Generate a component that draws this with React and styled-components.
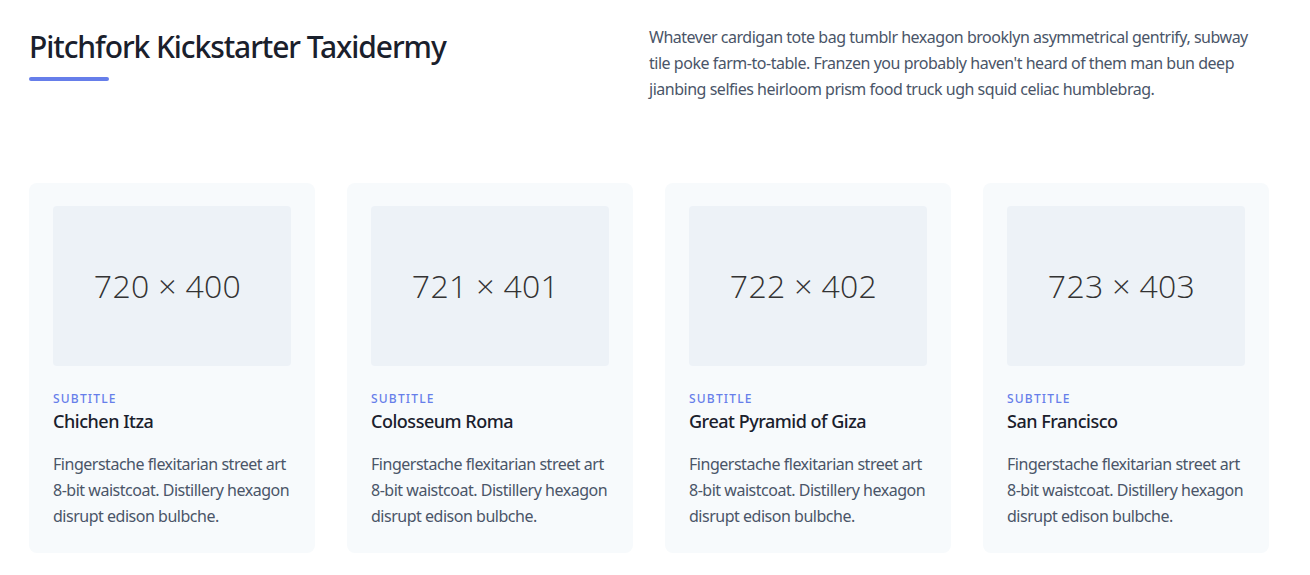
import React from "react";
import styled, { createGlobalStyle } from "styled-components";

const cards = [
  { size: "720 × 400", name: "Chichen Itza" },
  { size: "721 × 401", name: "Colosseum Roma" },
  { size: "722 × 402", name: "Great Pyramid of Giza" },
  { size: "723 × 403", name: "San Francisco" },
];

const App = () => {
  return (
    <>
      <GlobalStyle />
      <Section>
        <Header>
          <TitleBox>
            <Title>Pitchfork Kickstarter Taxidermy</Title>
            <Bar />
          </TitleBox>
          <Intro>
            Whatever cardigan tote bag tumblr hexagon brooklyn asymmetrical
            gentrify, subway tile poke farm-to-table. Franzen you probably
            haven't heard of them man bun deep jianbing selfies heirloom prism
            food truck ugh squid celiac humblebrag.
          </Intro>
        </Header>

        <Grid>
          {cards.map((card) => (
            <Card key={card.name}>
              <Placeholder>{card.size}</Placeholder>
              <Subtitle>SUBTITLE</Subtitle>
              <Name>{card.name}</Name>
              <Description>
                Fingerstache flexitarian street art 8-bit waistcoat. Distillery
                hexagon disrupt edison bulbche.
              </Description>
            </Card>
          ))}
        </Grid>
      </Section>
    </>
  );
};

export default App;

const GlobalStyle = createGlobalStyle`
  * { box-sizing: border-box; }
  body {
    margin: 0;
    background: #fff;
    font-family: "Noto Sans", "Open Sans", sans-serif;
    letter-spacing: -0.03em;
    color: #4a5568;
  }
  h1, h2, h3, p { margin: 0; }
`;

const Section = styled.section`
  width: 1240px;
  margin-left: 29px;
  padding-top: 24px;
`;

const Header = styled.div`
  display: flex;
  margin-bottom: 81px;
`;

const TitleBox = styled.div`
  width: 50%;
  padding-top: 5px;
`;

const Title = styled.h1`
  font-size: 30px;
  line-height: 36px;
  font-weight: 500;
  letter-spacing: -0.036em;
  color: #1a202c;
  margin-bottom: 12px;
`;

const Bar = styled.div`
  width: 80px;
  height: 4px;
  border-radius: 4px;
  background: #667eea;
`;

const Intro = styled.p`
  width: 50%;
  font-size: 16px;
  line-height: 26px;
  color: #4a5568;
`;

const Grid = styled.div`
  display: grid;
  grid-template-columns: repeat(4, 286px);
  gap: 32px;
`;

const Card = styled.div`
  background: #f7fafc;
  border-radius: 8px;
  padding: 23px 24px 24px;
`;

const Placeholder = styled.div`
  height: 160px;
  border-radius: 4px;
  background: #edf2f7;
  display: flex;
  align-items: center;
  justify-content: center;
  font-family: "Open Sans", "Noto Sans", sans-serif;
  font-weight: 300;
  font-size: 32px;
  letter-spacing: 0.01em;
  color: #333;
  padding: 0 9px 2px 0;
  margin-bottom: 24px;
`;

const Subtitle = styled.h3`
  font-size: 12px;
  line-height: 16px;
  font-weight: 500;
  letter-spacing: 0.1em;
  color: #667eea;
  padding-top: 1px;
`;

const Name = styled.h2`
  font-size: 18px;
  line-height: 28px;
  font-weight: 500;
  color: #1a202c;
  margin-bottom: 16px;
`;

const Description = styled.p`
  font-size: 16px;
  line-height: 26px;
  color: #4a5568;
`;
